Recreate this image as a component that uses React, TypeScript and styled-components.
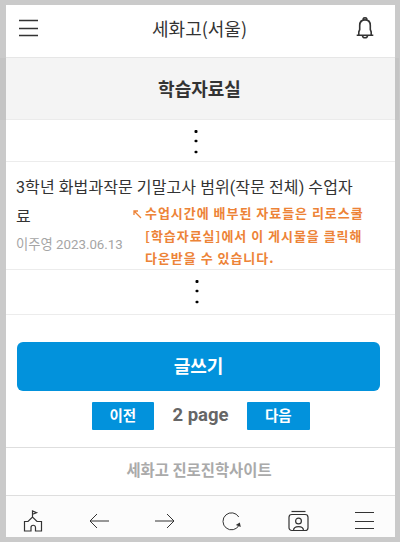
import React from "react";
import styled, { createGlobalStyle } from "styled-components";

const GlobalStyle = createGlobalStyle`
  * { box-sizing: border-box; }
  body { margin: 0; background: #cacaca; font-family: Roboto, "Noto Sans CJK KR", sans-serif; }
`;

const Frame = styled.div`
  width: 400px;
  height: 542px;
  padding: 5px 5px 5px 6px;
  background: #cacaca;
`;

const Screen = styled.main`
  width: 389px;
  height: 532px;
  display: flex;
  flex-direction: column;
  background: #fff;
`;

const TopBar = styled.header`
  height: 53px;
  display: flex;
  align-items: center;
  justify-content: space-between;
  padding: 0 21px 7px 13px;
  border-bottom: 1px solid #e6e6e6;
`;

const SchoolName = styled.h1`
  margin: 0;
  padding-left: 5px;
  font: 400 18px/26px "Noto Sans CJK KR", sans-serif;
  color: #333;
`;

const SectionTitle = styled.h2`
  margin: 0;
  height: 62px;
  border-bottom: 1px solid #ebebeb;
  background: #f4f4f4;
  box-shadow: -6px 0 #c4c4c4, 4px 0 #c4c4c4;
  font: 700 18px/60px "Noto Sans CJK KR", sans-serif;
  color: #333;
  text-align: center;
  padding-right: 2px;
`;

const Ellipsis = styled.div<{ $height: number; $shift: number }>`
  height: ${(p) => p.$height}px;
  padding: 10px ${(p) => p.$shift}px 0 0;
  display: flex;
  justify-content: center;
  border-bottom: 1px solid #ececec;
`;

const Post = styled.article`
  position: relative;
  height: 108px;
  padding: 12px 20px 0 10px;
  border-bottom: 1px solid #ececec;
`;

const PostTitle = styled.h3`
  margin: 0;
  font: 400 16px/28.5px Roboto, "Noto Sans CJK KR", sans-serif;
  letter-spacing: 0.09px;
  color: #333;
`;

const PostMeta = styled.p`
  margin: 0;
  font: 400 13.3px/27px Roboto, "Noto Sans CJK KR", sans-serif;
  color: #a5a5a5;
`;

const Note = styled.p`
  position: absolute;
  left: 126px;
  top: 40px;
  margin: 0;
  display: flex;
  font: 700 13px/22.5px "Noto Sans CJK KR", sans-serif;
  letter-spacing: 0.97px;
  color: #ed8337;
  white-space: nowrap;
`;

const NoteArrow = styled.svg`
  width: 9px;
  height: 9px;
  margin: 8px 3px 0 1px;
`;

const Actions = styled.section`
  height: 133px;
  padding: 27px 15px 0 11px;
  border-bottom: 1px solid #dedede;
`;

const WriteButton = styled.button`
  display: block;
  width: 100%;
  height: 49px;
  border: 0;
  padding: 0 0 2px;
  border-radius: 6px;
  background: #0292dc;
  color: #fff;
  font: 700 18px/47px "Noto Sans CJK KR", sans-serif;
`;

const Pager = styled.nav`
  margin-top: 11px;
  display: flex;
  justify-content: center;
  align-items: center;
  padding-left: 4px;
`;

const PageButton = styled.button`
  width: 62.5px;
  height: 28px;
  border: 0;
  padding: 0 0 2px;
  border-radius: 1px;
  background: #0292dc;
  color: #fff;
  font: 700 14.5px/26px "Noto Sans CJK KR", sans-serif;
`;

const PageLabel = styled.span`
  width: 93px;
  padding: 0 0 2px;
  text-align: center;
  font: 700 18.5px/26px Roboto, sans-serif;
  color: #666;
`;

const Footer = styled.footer`
  height: 48px;
  border-bottom: 1px solid #dedede;
  text-align: center;
  font: 700 15.4px/43px "Noto Sans CJK KR", sans-serif;
  color: #aaa;
  padding-right: 3px;
`;

const TabBar = styled.nav`
  flex: 1;
  display: flex;
  justify-content: space-between;
  align-items: center;
  padding: 9px 21px 0 17px;
  background: #fcfcfc;
`;

const Icon = styled.svg`
  display: block;
  fill: none;
  stroke: #333;
`;

const Dots = () => (
  <Icon width="4" height="27" viewBox="0 0 4 27">
    <g fill="#000" stroke="none">
      <rect x=".5" y="0" width="3" height="3" rx="1" />
      <rect x=".5" y="9.7" width="3" height="2.6" rx="1" />
      <rect x=".5" y="20.7" width="3" height="2.6" rx="1" />
    </g>
  </Icon>
);

export default function App() {
  return (
    <>
      <GlobalStyle />
      <Frame>
        <Screen>
          <TopBar>
            <Icon width="19" height="18" viewBox="0 0 19 18" strokeWidth="1.3">
              <path d="M0 1.5h19M0 9.5h19M0 16.5h19" />
            </Icon>
            <SchoolName>세화고(서울)</SchoolName>
            <Icon width="18" height="22" viewBox="0 0 18 22" strokeWidth="1.6">
              <path d="M.7 18.2h16.600M2.800 18V15l.9-2.500V8.500C3.700 5 5.900 2.900 9 2.900s5.300 2.100 5.300 5.600v4l.9 2.500v3" />
              <path d="M7.300 3V1.500c.4-.9 3-.9 3.400 0V3M6.500 18.800c.4 2.500 4.600 2.500 5 0" />
            </Icon>
          </TopBar>
          <SectionTitle>학습자료실</SectionTitle>
          <Ellipsis $height={42} $shift={10}><Dots /></Ellipsis>
          <Post>
            <PostTitle>3학년 화법과작문 기말고사 범위(작문 전체) 수업자<br />료</PostTitle>
            <PostMeta>이주영 2023.06.13</PostMeta>
            <Note>
              <NoteArrow viewBox="0 0 9 9" fill="none" stroke="#ed8337" strokeWidth="1.3">
                <path d="M1 5V1h4M1 1l7 7" />
              </NoteArrow>
              <span>수업시간에 배부된 자료들은 리로스쿨<br />[학습자료실]에서 이 게시물을 클릭해<br />다운받을 수 있습니다.</span>
            </Note>
          </Post>
          <Ellipsis $height={45} $shift={8}><Dots /></Ellipsis>
          <Actions>
            <WriteButton>글쓰기</WriteButton>
            <Pager>
              <PageButton>이전</PageButton>
              <PageLabel>2 page</PageLabel>
              <PageButton>다음</PageButton>
            </Pager>
          </Actions>
          <Footer>세화고 진로진학사이트</Footer>
          <TabBar>
            <Icon width="20" height="22" viewBox="0 0 20 22" strokeWidth="1.200">
              <path d="M1.500 11.500h3.500L9.500 7l4.500 4.500h4.500v9.500h-6v-3.500a2.200 2.200 0 0 0-4.500 0V21H1.500zM9.500 7V1l4 1.700-4 1.500" />
            </Icon>
            <Icon width="20" height="16" viewBox="0 0 20 16">
              <path d="M20 8H1M8 1L1 8l7 7" />
            </Icon>
            <Icon width="20" height="16" viewBox="0 0 20 16">
              <path d="M0 8h19M12 1l7 7-7 7" />
            </Icon>
            <Icon width="20" height="20" viewBox="0 0 20 20">
              <path d="M16.800 6A8.500 8.500 0 1 0 17 14.300" />
              <path d="M13.800 14l4-2.500 1 4.500z" fill="#333" stroke="none" />
            </Icon>
            <Icon width="21" height="22" viewBox="0 0 21 22" strokeWidth="1.200">
              <path d="M3.500 1.500h14" />
              <rect x="1" y="4.500" width="19" height="16" rx="2.800" />
              <circle cx="10.500" cy="11" r="2.900" />
              <path d="M5.500 20.500c0-5.300 10-5.300 10 0" />
            </Icon>
            <Icon width="19" height="18" viewBox="0 0 19 18">
              <path d="M0 .5h19M0 9.500h19M0 16.500h19" />
            </Icon>
          </TabBar>
        </Screen>
      </Frame>
    </>
  );
}
